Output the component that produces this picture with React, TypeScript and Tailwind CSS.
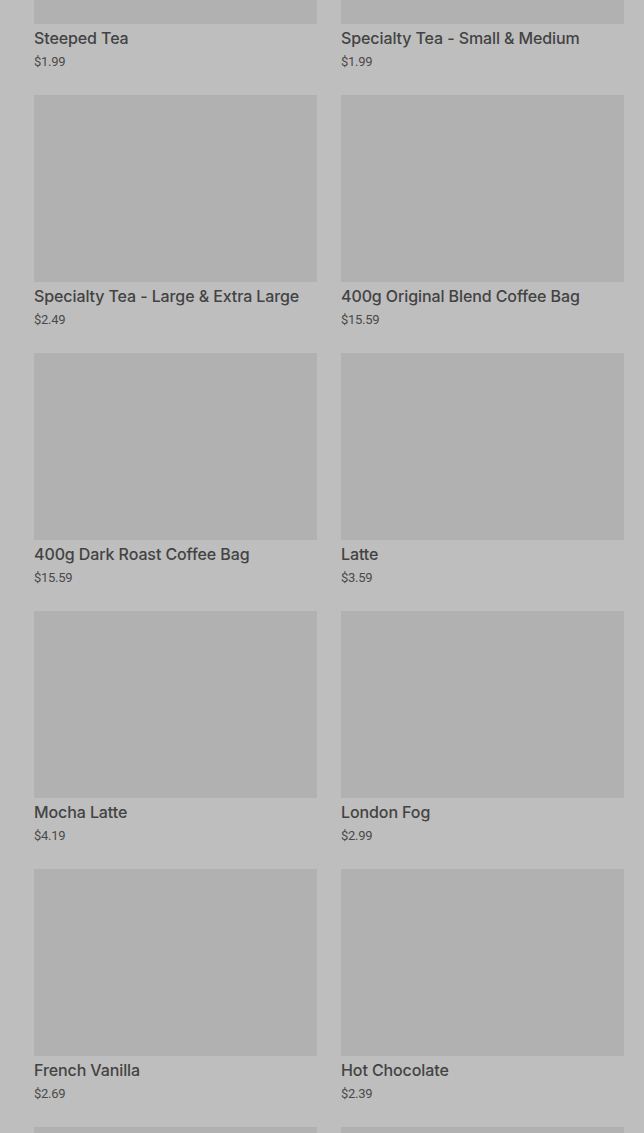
import React from 'react';

const PRODUCTS = [
  { name: 'Steeped Tea', price: '$1.99' },
  { name: 'Specialty Tea - Small & Medium', price: '$1.99' },
  { name: 'Specialty Tea - Large & Extra Large', price: '$2.49' },
  { name: '400g Original Blend Coffee Bag', price: '$15.59' },
  { name: '400g Dark Roast Coffee Bag', price: '$15.59' },
  { name: 'Latte', price: '$3.59' },
  { name: 'Mocha Latte', price: '$4.19' },
  { name: 'London Fog', price: '$2.99' },
  { name: 'French Vanilla', price: '$2.69' },
  { name: 'Hot Chocolate', price: '$2.39' },
];

export default function App() {
  return (
    <div
      className="h-[1133px] overflow-hidden bg-[#bebebe]"
      style={{ fontFamily: 'Inter, Roboto, "Noto Sans", sans-serif' }}
    >
      {/* page is scrolled: first row's image is cut off at the top */}
      <div className="mt-[-163px] grid grid-cols-2 gap-x-[24px] gap-y-[24px] pl-[34px] pr-[20px]">
        {PRODUCTS.map((p) => (
          <div key={p.name} className="flex flex-col">
            <div className="h-[187px] bg-[#b1b1b1]" />
            <div className="mt-[4px] text-[16px] leading-[20px] font-medium text-[#434343] tracking-[-0.1px]">
              {p.name}
            </div>
            <div
              className="mt-[5px] text-[13px] leading-[18px] text-[#4a4a4a] tracking-[-0.3px]"
              style={{ fontFamily: 'Roboto, sans-serif' }}
            >
              {p.price}
            </div>
          </div>
        ))}
        {/* next row, only the image tops are on screen */}
        <div className="h-[187px] bg-[#b1b1b1]" />
        <div className="h-[187px] bg-[#b1b1b1]" />
      </div>
    </div>
  );
}
